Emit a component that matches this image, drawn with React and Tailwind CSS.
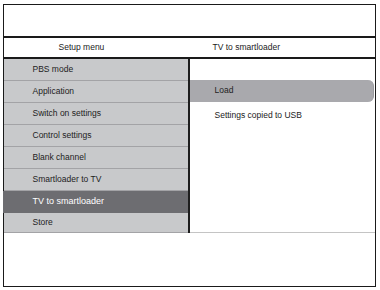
import React from "react";

const items = [
  "PBS mode",
  "Application",
  "Switch on settings",
  "Control settings",
  "Blank channel",
  "Smartloader to TV",
  "TV to smartloader",
  "Store",
];

export default function App() {
  const active = "TV to smartloader";

  return (
    <div
      className="w-[380px] h-[290px] bg-white overflow-hidden pt-[4px] pl-[3px]"
      style={{ fontFamily: '"Liberation Sans", Arial, sans-serif' }}
    >
      <div className="w-[373px] h-[283px] border-[1.5px] border-[#1a1a1a] flex flex-col">
        {/* Top blank area */}
        <div className="h-[30.5px]" />
        <div className="h-[2px] bg-[#1a1a1a]" />

        {/* Header */}
        <div className="h-[19px] flex items-center text-[8.5px] text-[#222]">
          <div className="w-[183.5px] pl-[54.5px]">Setup menu</div>
          <div className="flex-1 pl-[25px]">TV to smartloader</div>
        </div>
        <div className="h-[2px] bg-[#1a1a1a]" />

        {/* Body */}
        <div className="h-[174px] flex">
          <div className="w-[183.5px] flex flex-col bg-[#c8c9cb]">
            {items.map((label, i) =>
              label === active ? (
                <div
                  key={label}
                  className="h-[22px] flex items-center bg-[#6d6d71] text-white text-[9px] -ml-[1.5px] pl-[30px]"
                >
                  {label}
                </div>
              ) : (
                <div
                  key={label}
                  className={
                    i === items.length - 1
                      ? "h-[20px] flex items-center pl-[28.5px] border-b border-[#a3a3a6] text-[8.5px] text-[#222]"
                      : "h-[22px] flex items-center pl-[28.5px] border-b border-[#a3a3a6] text-[8.5px] text-[#222]"
                  }
                >
                  {label}
                </div>
              )
            )}
          </div>
          <div className="w-[2px] bg-[#1e1e1e]" />
          <div className="flex-1 flex flex-col border-b border-[#c4c4c4]">
            <div className="h-[21px]" />
            <div className="h-[22px] mr-[1.5px] rounded-r-[6px] bg-[#a9a9ad] border-r border-[#9a9a9e] flex items-center pl-[25px] text-[8.5px] text-[#222]">
              Load
            </div>
            <div className="h-[22px] mt-[3px] flex items-center pl-[25px] text-[8.5px] text-[#222]">
              Settings copied to USB
            </div>
          </div>
        </div>

        {/* Bottom blank */}
        <div className="flex-1" />
      </div>
    </div>
  );
}
